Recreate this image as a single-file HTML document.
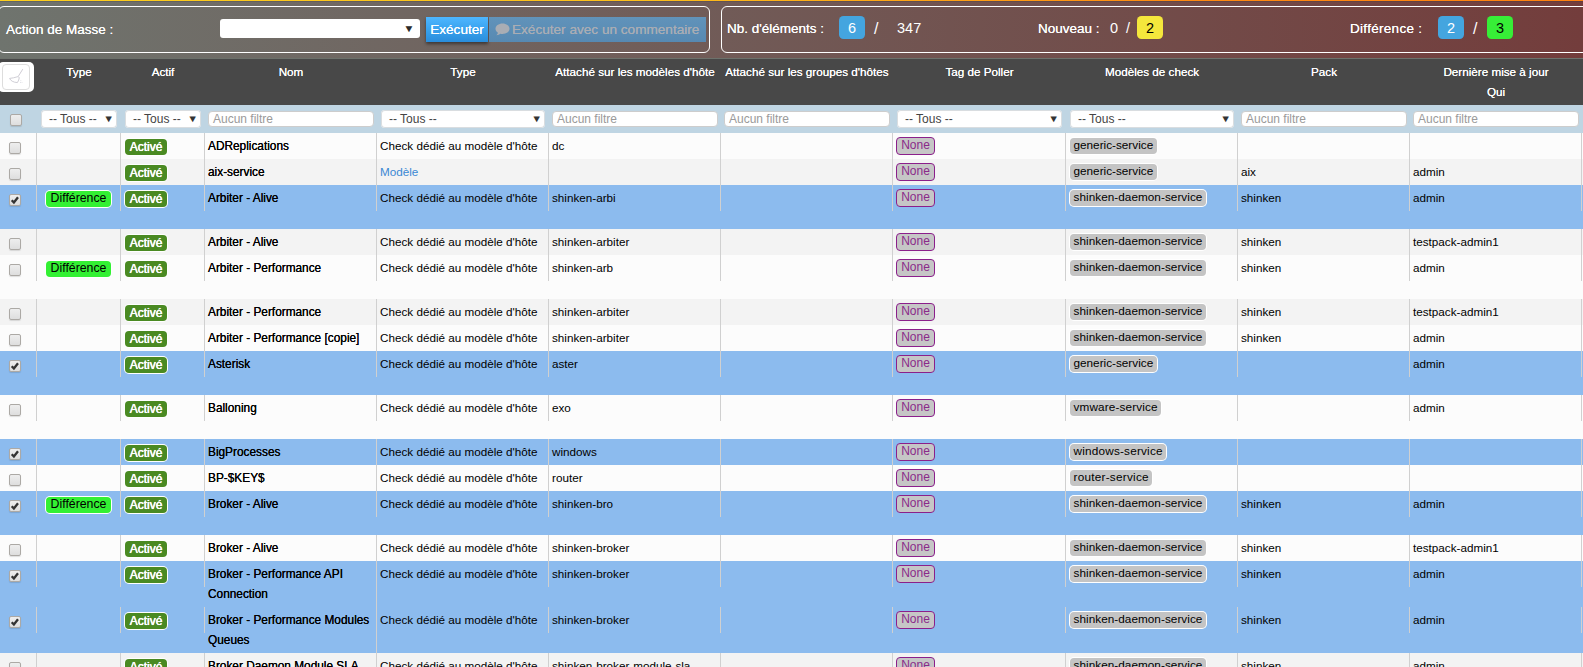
<!DOCTYPE html><html><head><meta charset="utf-8"><title>Checks</title><style>
html,body{margin:0;padding:0;}
body{width:1583px;height:667px;overflow:hidden;background:#fcfcfc;font-family:"Liberation Sans",sans-serif;font-size:12px;color:#111;position:relative;}
div,span{box-sizing:border-box;}
.abs{position:absolute;}
#topbar{left:0;top:0;width:1583px;height:59px;background:linear-gradient(90deg,#6f746e 0%,#733d3c 100%);border-bottom:1px solid #6d726c;}
#topline{left:0;top:0;width:1583px;height:1px;background:linear-gradient(90deg,#fdd01e 0%,#fdc01c 40%,#ff8a12 75%,#ff8210 100%);box-shadow:0 1px 0 rgba(60,60,70,0.25);}
.box{position:absolute;top:6px;height:47px;border:1px solid #fff;border-radius:6px;}
.tb{position:absolute;color:#fff;font-size:13.5px;white-space:nowrap;line-height:16px;text-shadow:0 0 0.5px #fff;margin-top:0.5px;}
.pill{position:absolute;top:16px;height:23px;width:26px;border-radius:4.5px;text-align:center;font-size:14.5px;line-height:24px;}
#header{left:0;top:59px;width:1583px;height:46px;background:#484848;}
.hd{position:absolute;color:#fff;font-size:11.7px;font-weight:normal;text-align:center;white-space:nowrap;line-height:20px;text-shadow:0 0 0.6px #fff;}
#filters{left:0;top:105px;width:1583px;height:28px;background:#bfd5e3;}
.sel{position:absolute;top:5px;height:17.5px;background:#fff;border-radius:4px;box-shadow:inset 0 0 0 1px #d9dde0;font-size:12px;color:#444;line-height:19px;padding-left:8.5px;white-space:nowrap;overflow:hidden;}
.sel i{position:absolute;right:4px;top:-1px;font-style:normal;font-size:9.5px;color:#333;transform:scaleX(1.15);}
.inp{position:absolute;top:6px;height:16px;background:#fff;border-radius:4px;font-size:12px;color:#9a9a9a;line-height:15px;padding-left:4px;white-space:nowrap;border:1px solid #cdcdcd;}
.cb{position:absolute;width:12px;height:12px;border:1px solid #aca9a5;border-radius:2px;background:linear-gradient(180deg,#eeeeee,#dedede);box-shadow:0 1px 1px rgba(0,0,0,0.12);}
.row{position:absolute;left:0;width:1583px;}
.sep{position:absolute;top:0;width:1px;height:26px;background:#d0d0d0;}
.t{position:absolute;top:0;line-height:26px;white-space:nowrap;font-size:11.7px;color:#000;}
.nm{font-size:11.85px;color:#000;text-shadow:0 0 0.4px #000;line-height:20px;top:3px;}
.act{position:absolute;top:6px;height:16px;width:42px;background:#4a8a22;color:#fff;border-radius:4px;font-size:12px;font-weight:normal;line-height:16px;text-align:center;text-shadow:0 0 0.7px #fff,0 0 0.3px #fff;}
.dif{position:absolute;top:6px;height:16px;width:65px;background:#33f033;color:#000;border-radius:4px;font-size:12.3px;line-height:15px;text-align:center;}
.non{position:absolute;top:4px;height:18px;width:39px;background:#c6c6c6;color:#8a2a8a;border:1.5px solid #8b1f8b;border-radius:4px;font-size:12px;line-height:15px;text-align:center;}
.chk{position:absolute;top:5px;height:16px;background:#c4c4c4;color:#000;border-radius:4px;font-size:11.75px;line-height:14px;padding:0 3.5px;white-space:nowrap;box-shadow:0 0 0 1px #fff;}
.act,.dif{box-shadow:0 0 0 1px #fff;}
</style></head><body>
<div id="topbar" class="abs">
<div class="box" style="left:-2px;width:712px"></div>
<div class="box" style="left:721px;width:880px"></div>
<div class="tb" style="left:6px;top:21px">Action de Masse :</div>
<div class="abs" style="left:220px;top:19px;width:200px;height:19px;background:#fff;border-radius:3px"><span class="abs" style="right:6px;top:3px;font-size:10px;line-height:14px;color:#2a2a2a;transform:scaleX(1.15)">&#9660;</span></div>
<div class="abs" style="left:426px;top:17px;width:62px;height:25px;background:linear-gradient(180deg,#4eb6ff 0%,#3aa4f0 45%,#2a8ddb 100%);box-shadow:0 2px 3px rgba(0,0,0,.45);color:#fff;font-size:13.6px;line-height:25px;text-align:center;text-shadow:0 0 0.5px #fff">Exécuter</div>
<div class="abs" style="left:489px;top:17px;width:217px;height:25px;background:linear-gradient(180deg,#6193ba,#5789b2);color:#a9adb4;font-size:13.6px;line-height:25px;white-space:nowrap;padding-left:23px;text-shadow:0 0 0.5px #a9adb4"><svg class="abs" style="left:6px;top:6px" width="15" height="13" viewBox="0 0 15 13"><path d="M7.5 0.5C3.6 0.5 0.5 2.8 0.5 5.7c0 1.6 1 3 2.5 4 -0.2 0.9-0.8 1.8-1.6 2.5 1.6-0.1 3-0.7 4-1.5 0.7 0.1 1.4 0.2 2.1 0.2 3.9 0 7-2.3 7-5.2S11.400 0.5 7.500 0.500z" fill="#a9adb4"/></svg>Exécuter avec un commentaire</div>
<div class="tb" style="left:727px;top:20px">Nb. d'éléments :</div>
<div class="pill" style="left:839px;background:#44a5df;color:#fff">6</div>
<div class="tb" style="left:874px;top:20px;font-size:16px;text-shadow:none">/</div>
<div class="tb" style="left:897px;top:19px;font-size:14.5px;text-shadow:none">347</div>
<div class="tb" style="left:1038px;top:20px">Nouveau :</div>
<div class="tb" style="left:1110px;top:19px;font-size:14.5px;text-shadow:none">0&nbsp; /</div>
<div class="pill" style="left:1137px;background:#f5e73c;color:#000">2</div>
<div class="tb" style="left:1350px;top:20px;letter-spacing:0.3px">Différence :</div>
<div class="pill" style="left:1438px;background:#44a5df;color:#fff">2</div>
<div class="tb" style="left:1473px;top:20px;font-size:16px;text-shadow:none">/</div>
<div class="pill" style="left:1487px;background:#37ee37;color:#000">3</div>
</div><div id="topline" class="abs"></div>
<div id="header" class="abs">
<div class="abs" style="left:-2px;top:3px;width:36px;height:30px;background:#fff;border-radius:5px"><div class="abs" style="left:4px;top:2px;width:28px;height:26px;border:1px solid #ddd;border-radius:4px"></div><svg class="abs" style="left:10px;top:6px" width="16" height="16" viewBox="8 68 16 16"><path d="M22.800 69.100L18.300 76.300" stroke="#c9c6cf" stroke-width="0.9" fill="none"/><path d="M18 76.600C15 77.600 12 78.200 9.600 78.400C10.500 80.600 13 82.300 17.400 82.600C18.500 81 19.100 79.200 19.300 77.500Z" fill="none" stroke="#cac8d0" stroke-width="0.9"/><circle cx="20.900" cy="80.800" r="0.450" fill="#c8c8d2"/><circle cx="22" cy="82.200" r="0.450" fill="#c8c8d2"/><circle cx="20.500" cy="82.500" r="0.450" fill="#c8c8d2"/></svg></div>
<div class="hd" style="left:37px;width:84px;top:3px">Type</div>
<div class="hd" style="left:121px;width:84px;top:3px">Actif</div>
<div class="hd" style="left:205px;width:172px;top:3px">Nom</div>
<div class="hd" style="left:377px;width:172px;top:3px">Type</div>
<div class="hd" style="left:549px;width:172px;top:3px">Attaché sur les modèles d'hôte</div>
<div class="hd" style="left:721px;width:172px;top:3px">Attaché sur les groupes d'hôtes</div>
<div class="hd" style="left:893px;width:173px;top:3px">Tag de Poller</div>
<div class="hd" style="left:1066px;width:172px;top:3px">Modèles de check</div>
<div class="hd" style="left:1238px;width:172px;top:3px">Pack</div>
<div class="hd" style="left:1410px;width:172px;top:3px">Dernière mise à jour<br>Qui</div>
</div>
<div id="filters" class="abs">
<div class="cb" style="left:10px;top:9px"></div>
<div class="sel" style="left:40.5px;width:76.5px">-- Tous --<i>&#9660;</i></div>
<div class="sel" style="left:124.5px;width:76.5px">-- Tous --<i>&#9660;</i></div>
<div class="inp" style="left:208px;width:166px">Aucun filtre</div>
<div class="sel" style="left:380.5px;width:164.5px">-- Tous --<i>&#9660;</i></div>
<div class="inp" style="left:552px;width:166px">Aucun filtre</div>
<div class="inp" style="left:724px;width:166px">Aucun filtre</div>
<div class="sel" style="left:896.5px;width:165.5px">-- Tous --<i>&#9660;</i></div>
<div class="sel" style="left:1069.5px;width:164.5px">-- Tous --<i>&#9660;</i></div>
<div class="inp" style="left:1241px;width:166px">Aucun filtre</div>
<div class="inp" style="left:1413px;width:166px">Aucun filtre</div>
</div>
<div class="row" style="top:133px;height:26px;background:#fcfcfc">
<div class="sep" style="left:36px"></div>
<div class="sep" style="left:120px"></div>
<div class="sep" style="left:204px"></div>
<div class="sep" style="left:376px"></div>
<div class="sep" style="left:548px"></div>
<div class="sep" style="left:720px"></div>
<div class="sep" style="left:892px"></div>
<div class="sep" style="left:1065px"></div>
<div class="sep" style="left:1237px"></div>
<div class="sep" style="left:1409px"></div>
<div class="sep" style="left:1581px"></div>
<div class="cb" style="left:9px;top:9px"></div>
<div class="act" style="left:125px">Activé</div>
<div class="t nm" style="left:208px">ADReplications</div>
<div class="t" style="left:380px">Check dédié au modèle d'hôte</div>
<div class="t" style="left:552px">dc</div>
<div class="non" style="left:896px">None</div>
<div class="chk" style="left:1070px">generic-service</div>
</div>
<div class="row" style="top:159px;height:26px;background:#f3f3f3">
<div class="sep" style="left:36px"></div>
<div class="sep" style="left:120px"></div>
<div class="sep" style="left:204px"></div>
<div class="sep" style="left:376px"></div>
<div class="sep" style="left:548px"></div>
<div class="sep" style="left:720px"></div>
<div class="sep" style="left:892px"></div>
<div class="sep" style="left:1065px"></div>
<div class="sep" style="left:1237px"></div>
<div class="sep" style="left:1409px"></div>
<div class="sep" style="left:1581px"></div>
<div class="cb" style="left:9px;top:9px"></div>
<div class="act" style="left:125px">Activé</div>
<div class="t nm" style="left:208px">aix-service</div>
<div class="t" style="left:380px;color:#3a88d3">Modèle</div>
<div class="non" style="left:896px">None</div>
<div class="chk" style="left:1070px">generic-service</div>
<div class="t" style="left:1241px">aix</div>
<div class="t" style="left:1413px">admin</div>
</div>
<div class="row selrow" style="top:185px;height:44px;background:#8cbbee">
<div class="sep" style="left:36px"></div>
<div class="sep" style="left:120px"></div>
<div class="sep" style="left:204px"></div>
<div class="sep" style="left:376px"></div>
<div class="sep" style="left:548px"></div>
<div class="sep" style="left:720px"></div>
<div class="sep" style="left:892px"></div>
<div class="sep" style="left:1065px"></div>
<div class="sep" style="left:1237px"></div>
<div class="sep" style="left:1409px"></div>
<div class="sep" style="left:1581px"></div>
<div class="cb" style="left:9px;top:9px"><svg class="abs" style="left:-1px;top:-1px" width="12" height="12" viewBox="0 0 12 12"><path d="M2.700 6.200L4.900 8.500L9 3.200" stroke="#333" stroke-width="2.300" fill="none"/></svg></div>
<div class="dif" style="left:46px">Différence</div>
<div class="act" style="left:125px">Activé</div>
<div class="t nm" style="left:208px">Arbiter - Alive</div>
<div class="t" style="left:380px">Check dédié au modèle d'hôte</div>
<div class="t" style="left:552px">shinken-arbi</div>
<div class="non" style="left:896px">None</div>
<div class="chk" style="left:1070px;letter-spacing:0.04px">shinken-daemon-service</div>
<div class="t" style="left:1241px">shinken</div>
<div class="t" style="left:1413px">admin</div>
</div>
<div class="row" style="top:229px;height:26px;background:#f3f3f3">
<div class="sep" style="left:36px"></div>
<div class="sep" style="left:120px"></div>
<div class="sep" style="left:204px"></div>
<div class="sep" style="left:376px"></div>
<div class="sep" style="left:548px"></div>
<div class="sep" style="left:720px"></div>
<div class="sep" style="left:892px"></div>
<div class="sep" style="left:1065px"></div>
<div class="sep" style="left:1237px"></div>
<div class="sep" style="left:1409px"></div>
<div class="sep" style="left:1581px"></div>
<div class="cb" style="left:9px;top:9px"></div>
<div class="act" style="left:125px">Activé</div>
<div class="t nm" style="left:208px">Arbiter - Alive</div>
<div class="t" style="left:380px">Check dédié au modèle d'hôte</div>
<div class="t" style="left:552px">shinken-arbiter</div>
<div class="non" style="left:896px">None</div>
<div class="chk" style="left:1070px;letter-spacing:0.04px">shinken-daemon-service</div>
<div class="t" style="left:1241px">shinken</div>
<div class="t" style="left:1413px">testpack-admin1</div>
</div>
<div class="row" style="top:255px;height:44px;background:#fcfcfc">
<div class="sep" style="left:36px"></div>
<div class="sep" style="left:120px"></div>
<div class="sep" style="left:204px"></div>
<div class="sep" style="left:376px"></div>
<div class="sep" style="left:548px"></div>
<div class="sep" style="left:720px"></div>
<div class="sep" style="left:892px"></div>
<div class="sep" style="left:1065px"></div>
<div class="sep" style="left:1237px"></div>
<div class="sep" style="left:1409px"></div>
<div class="sep" style="left:1581px"></div>
<div class="cb" style="left:9px;top:9px"></div>
<div class="dif" style="left:46px">Différence</div>
<div class="act" style="left:125px">Activé</div>
<div class="t nm" style="left:208px">Arbiter - Performance</div>
<div class="t" style="left:380px">Check dédié au modèle d'hôte</div>
<div class="t" style="left:552px">shinken-arb</div>
<div class="non" style="left:896px">None</div>
<div class="chk" style="left:1070px;letter-spacing:0.04px">shinken-daemon-service</div>
<div class="t" style="left:1241px">shinken</div>
<div class="t" style="left:1413px">admin</div>
</div>
<div class="row" style="top:299px;height:26px;background:#f3f3f3">
<div class="sep" style="left:36px"></div>
<div class="sep" style="left:120px"></div>
<div class="sep" style="left:204px"></div>
<div class="sep" style="left:376px"></div>
<div class="sep" style="left:548px"></div>
<div class="sep" style="left:720px"></div>
<div class="sep" style="left:892px"></div>
<div class="sep" style="left:1065px"></div>
<div class="sep" style="left:1237px"></div>
<div class="sep" style="left:1409px"></div>
<div class="sep" style="left:1581px"></div>
<div class="cb" style="left:9px;top:9px"></div>
<div class="act" style="left:125px">Activé</div>
<div class="t nm" style="left:208px">Arbiter - Performance</div>
<div class="t" style="left:380px">Check dédié au modèle d'hôte</div>
<div class="t" style="left:552px">shinken-arbiter</div>
<div class="non" style="left:896px">None</div>
<div class="chk" style="left:1070px;letter-spacing:0.04px">shinken-daemon-service</div>
<div class="t" style="left:1241px">shinken</div>
<div class="t" style="left:1413px">testpack-admin1</div>
</div>
<div class="row" style="top:325px;height:26px;background:#fcfcfc">
<div class="sep" style="left:36px"></div>
<div class="sep" style="left:120px"></div>
<div class="sep" style="left:204px"></div>
<div class="sep" style="left:376px"></div>
<div class="sep" style="left:548px"></div>
<div class="sep" style="left:720px"></div>
<div class="sep" style="left:892px"></div>
<div class="sep" style="left:1065px"></div>
<div class="sep" style="left:1237px"></div>
<div class="sep" style="left:1409px"></div>
<div class="sep" style="left:1581px"></div>
<div class="cb" style="left:9px;top:9px"></div>
<div class="act" style="left:125px">Activé</div>
<div class="t nm" style="left:208px">Arbiter - Performance [copie]</div>
<div class="t" style="left:380px">Check dédié au modèle d'hôte</div>
<div class="t" style="left:552px">shinken-arbiter</div>
<div class="non" style="left:896px">None</div>
<div class="chk" style="left:1070px;letter-spacing:0.04px">shinken-daemon-service</div>
<div class="t" style="left:1241px">shinken</div>
<div class="t" style="left:1413px">admin</div>
</div>
<div class="row selrow" style="top:351px;height:44px;background:#8cbbee">
<div class="sep" style="left:36px"></div>
<div class="sep" style="left:120px"></div>
<div class="sep" style="left:204px"></div>
<div class="sep" style="left:376px"></div>
<div class="sep" style="left:548px"></div>
<div class="sep" style="left:720px"></div>
<div class="sep" style="left:892px"></div>
<div class="sep" style="left:1065px"></div>
<div class="sep" style="left:1237px"></div>
<div class="sep" style="left:1409px"></div>
<div class="sep" style="left:1581px"></div>
<div class="cb" style="left:9px;top:9px"><svg class="abs" style="left:-1px;top:-1px" width="12" height="12" viewBox="0 0 12 12"><path d="M2.700 6.200L4.900 8.500L9 3.200" stroke="#333" stroke-width="2.300" fill="none"/></svg></div>
<div class="act" style="left:125px">Activé</div>
<div class="t nm" style="left:208px">Asterisk</div>
<div class="t" style="left:380px">Check dédié au modèle d'hôte</div>
<div class="t" style="left:552px">aster</div>
<div class="non" style="left:896px">None</div>
<div class="chk" style="left:1070px">generic-service</div>
<div class="t" style="left:1413px">admin</div>
</div>
<div class="row" style="top:395px;height:44px;background:#fcfcfc">
<div class="sep" style="left:36px"></div>
<div class="sep" style="left:120px"></div>
<div class="sep" style="left:204px"></div>
<div class="sep" style="left:376px"></div>
<div class="sep" style="left:548px"></div>
<div class="sep" style="left:720px"></div>
<div class="sep" style="left:892px"></div>
<div class="sep" style="left:1065px"></div>
<div class="sep" style="left:1237px"></div>
<div class="sep" style="left:1409px"></div>
<div class="sep" style="left:1581px"></div>
<div class="cb" style="left:9px;top:9px"></div>
<div class="act" style="left:125px">Activé</div>
<div class="t nm" style="left:208px">Balloning</div>
<div class="t" style="left:380px">Check dédié au modèle d'hôte</div>
<div class="t" style="left:552px">exo</div>
<div class="non" style="left:896px">None</div>
<div class="chk" style="left:1070px;letter-spacing:0.14px">vmware-service</div>
<div class="t" style="left:1413px">admin</div>
</div>
<div class="row selrow" style="top:439px;height:26px;background:#8cbbee">
<div class="sep" style="left:36px"></div>
<div class="sep" style="left:120px"></div>
<div class="sep" style="left:204px"></div>
<div class="sep" style="left:376px"></div>
<div class="sep" style="left:548px"></div>
<div class="sep" style="left:720px"></div>
<div class="sep" style="left:892px"></div>
<div class="sep" style="left:1065px"></div>
<div class="sep" style="left:1237px"></div>
<div class="sep" style="left:1409px"></div>
<div class="sep" style="left:1581px"></div>
<div class="cb" style="left:9px;top:9px"><svg class="abs" style="left:-1px;top:-1px" width="12" height="12" viewBox="0 0 12 12"><path d="M2.700 6.200L4.900 8.500L9 3.200" stroke="#333" stroke-width="2.300" fill="none"/></svg></div>
<div class="act" style="left:125px">Activé</div>
<div class="t nm" style="left:208px">BigProcesses</div>
<div class="t" style="left:380px">Check dédié au modèle d'hôte</div>
<div class="t" style="left:552px">windows</div>
<div class="non" style="left:896px">None</div>
<div class="chk" style="left:1070px;letter-spacing:0.2px">windows-service</div>
</div>
<div class="row" style="top:465px;height:26px;background:#fcfcfc">
<div class="sep" style="left:36px"></div>
<div class="sep" style="left:120px"></div>
<div class="sep" style="left:204px"></div>
<div class="sep" style="left:376px"></div>
<div class="sep" style="left:548px"></div>
<div class="sep" style="left:720px"></div>
<div class="sep" style="left:892px"></div>
<div class="sep" style="left:1065px"></div>
<div class="sep" style="left:1237px"></div>
<div class="sep" style="left:1409px"></div>
<div class="sep" style="left:1581px"></div>
<div class="cb" style="left:9px;top:9px"></div>
<div class="act" style="left:125px">Activé</div>
<div class="t nm" style="left:208px">BP-$KEY$</div>
<div class="t" style="left:380px">Check dédié au modèle d'hôte</div>
<div class="t" style="left:552px">router</div>
<div class="non" style="left:896px">None</div>
<div class="chk" style="left:1070px;letter-spacing:0.25px">router-service</div>
</div>
<div class="row selrow" style="top:491px;height:44px;background:#8cbbee">
<div class="sep" style="left:36px"></div>
<div class="sep" style="left:120px"></div>
<div class="sep" style="left:204px"></div>
<div class="sep" style="left:376px"></div>
<div class="sep" style="left:548px"></div>
<div class="sep" style="left:720px"></div>
<div class="sep" style="left:892px"></div>
<div class="sep" style="left:1065px"></div>
<div class="sep" style="left:1237px"></div>
<div class="sep" style="left:1409px"></div>
<div class="sep" style="left:1581px"></div>
<div class="cb" style="left:9px;top:9px"><svg class="abs" style="left:-1px;top:-1px" width="12" height="12" viewBox="0 0 12 12"><path d="M2.700 6.200L4.900 8.500L9 3.200" stroke="#333" stroke-width="2.300" fill="none"/></svg></div>
<div class="dif" style="left:46px">Différence</div>
<div class="act" style="left:125px">Activé</div>
<div class="t nm" style="left:208px">Broker - Alive</div>
<div class="t" style="left:380px">Check dédié au modèle d'hôte</div>
<div class="t" style="left:552px">shinken-bro</div>
<div class="non" style="left:896px">None</div>
<div class="chk" style="left:1070px;letter-spacing:0.04px">shinken-daemon-service</div>
<div class="t" style="left:1241px">shinken</div>
<div class="t" style="left:1413px">admin</div>
</div>
<div class="row" style="top:535px;height:26px;background:#fcfcfc">
<div class="sep" style="left:36px"></div>
<div class="sep" style="left:120px"></div>
<div class="sep" style="left:204px"></div>
<div class="sep" style="left:376px"></div>
<div class="sep" style="left:548px"></div>
<div class="sep" style="left:720px"></div>
<div class="sep" style="left:892px"></div>
<div class="sep" style="left:1065px"></div>
<div class="sep" style="left:1237px"></div>
<div class="sep" style="left:1409px"></div>
<div class="sep" style="left:1581px"></div>
<div class="cb" style="left:9px;top:9px"></div>
<div class="act" style="left:125px">Activé</div>
<div class="t nm" style="left:208px">Broker - Alive</div>
<div class="t" style="left:380px">Check dédié au modèle d'hôte</div>
<div class="t" style="left:552px">shinken-broker</div>
<div class="non" style="left:896px">None</div>
<div class="chk" style="left:1070px;letter-spacing:0.04px">shinken-daemon-service</div>
<div class="t" style="left:1241px">shinken</div>
<div class="t" style="left:1413px">testpack-admin1</div>
</div>
<div class="row selrow" style="top:561px;height:46px;background:#8cbbee">
<div class="sep" style="left:36px"></div>
<div class="sep" style="left:120px"></div>
<div class="sep" style="left:204px"></div>
<div class="sep" style="left:376px;height:46px"></div>
<div class="sep" style="left:548px"></div>
<div class="sep" style="left:720px"></div>
<div class="sep" style="left:892px"></div>
<div class="sep" style="left:1065px"></div>
<div class="sep" style="left:1237px"></div>
<div class="sep" style="left:1409px"></div>
<div class="sep" style="left:1581px"></div>
<div class="cb" style="left:9px;top:9px"><svg class="abs" style="left:-1px;top:-1px" width="12" height="12" viewBox="0 0 12 12"><path d="M2.700 6.200L4.900 8.500L9 3.200" stroke="#333" stroke-width="2.300" fill="none"/></svg></div>
<div class="act" style="left:125px">Activé</div>
<div class="t nm" style="left:208px">Broker - Performance API<br>Connection</div>
<div class="t" style="left:380px">Check dédié au modèle d'hôte</div>
<div class="t" style="left:552px">shinken-broker</div>
<div class="non" style="left:896px">None</div>
<div class="chk" style="left:1070px;letter-spacing:0.04px">shinken-daemon-service</div>
<div class="t" style="left:1241px">shinken</div>
<div class="t" style="left:1413px">admin</div>
</div>
<div class="row selrow" style="top:607px;height:46px;background:#8cbbee">
<div class="sep" style="left:36px"></div>
<div class="sep" style="left:120px"></div>
<div class="sep" style="left:204px"></div>
<div class="sep" style="left:376px;height:46px"></div>
<div class="sep" style="left:548px"></div>
<div class="sep" style="left:720px"></div>
<div class="sep" style="left:892px"></div>
<div class="sep" style="left:1065px"></div>
<div class="sep" style="left:1237px"></div>
<div class="sep" style="left:1409px"></div>
<div class="sep" style="left:1581px"></div>
<div class="cb" style="left:9px;top:9px"><svg class="abs" style="left:-1px;top:-1px" width="12" height="12" viewBox="0 0 12 12"><path d="M2.700 6.200L4.900 8.500L9 3.200" stroke="#333" stroke-width="2.300" fill="none"/></svg></div>
<div class="act" style="left:125px">Activé</div>
<div class="t nm" style="left:208px">Broker - Performance Modules<br>Queues</div>
<div class="t" style="left:380px">Check dédié au modèle d'hôte</div>
<div class="t" style="left:552px">shinken-broker</div>
<div class="non" style="left:896px">None</div>
<div class="chk" style="left:1070px;letter-spacing:0.04px">shinken-daemon-service</div>
<div class="t" style="left:1241px">shinken</div>
<div class="t" style="left:1413px">admin</div>
</div>
<div class="row" style="top:653px;height:26px;background:#f3f3f3">
<div class="sep" style="left:36px"></div>
<div class="sep" style="left:120px"></div>
<div class="sep" style="left:204px"></div>
<div class="sep" style="left:376px"></div>
<div class="sep" style="left:548px"></div>
<div class="sep" style="left:720px"></div>
<div class="sep" style="left:892px"></div>
<div class="sep" style="left:1065px"></div>
<div class="sep" style="left:1237px"></div>
<div class="sep" style="left:1409px"></div>
<div class="sep" style="left:1581px"></div>
<div class="cb" style="left:9px;top:9px"></div>
<div class="act" style="left:125px">Activé</div>
<div class="t nm" style="left:208px">Broker Daemon Module SLA</div>
<div class="t" style="left:380px">Check dédié au modèle d'hôte</div>
<div class="t" style="left:552px">shinken-broker-module-sla</div>
<div class="non" style="left:896px">None</div>
<div class="chk" style="left:1070px;letter-spacing:0.04px">shinken-daemon-service</div>
<div class="t" style="left:1241px">shinken</div>
<div class="t" style="left:1413px">admin</div>
</div>
</body></html>
